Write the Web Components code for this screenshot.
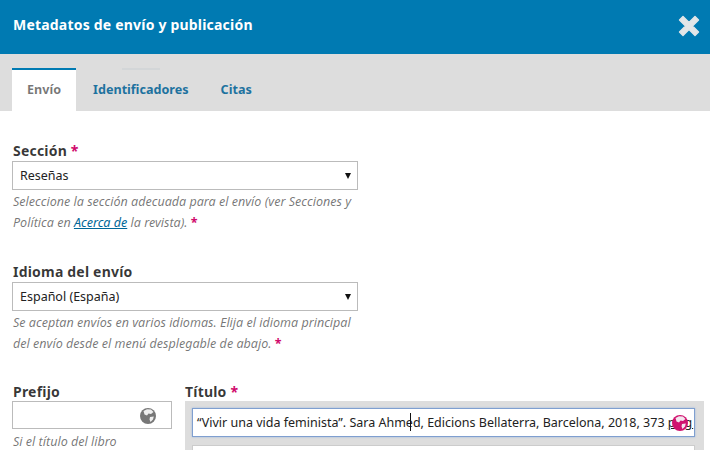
<!DOCTYPE html>
<html lang="es">
<head>
<meta charset="utf-8">
<title>Metadatos de envío y publicación</title>
<style>
  html, body { margin: 0; height: 100%; overflow: hidden; background: #fff; }
  body { font-family: "Noto Sans", sans-serif; color: rgba(0,0,0,.84); }
  u { letter-spacing: 1px; }
</style>
</head>
<body>
<template id="ojs-modal-template">
  <style>
    :host { display: block; width: 710px; height: 450px; overflow: hidden; }
    header { height: 54px; box-sizing: border-box; background: #007ab2; color: #fff; display: flex; align-items: center; justify-content: space-between; padding: 0 10px 6px 13px; font-size: 14px; font-weight: 700; letter-spacing: .2px; }
    svg { display: block; width: 22px; height: 22px; margin-top: 3px; }
    .body { padding: 0 12px; }
  </style>
  <header>
    <slot name="title"></slot>
    <svg viewBox="0 0 22 22"><path d="M5 1.5 11 7.5 17 1.5 20.5 5 14.5 11 20.5 17 17 20.5 11 14.5 5 20.5 1.5 17 7.5 11 1.5 5Z" fill="#e3e6e8" stroke="#e3e6e8" stroke-width="1.4" stroke-linejoin="round"/></svg>
  </header>
  <slot name="tabs"></slot>
  <div class="body"><slot></slot></div>
</template>

<template id="ojs-tabs-template">
  <style>
    :host { display: flex; height: 57px; box-sizing: border-box; padding: 14px 12px 0; background: #ddd; position: relative; }
    :host::after { content: ""; position: absolute; left: 122px; top: 14px; width: 38px; height: 2px; background: #d3d6d8; }
  </style>
  <slot></slot>
</template>

<template id="ojs-tab-template">
  <style>
    :host { display: block; box-sizing: border-box; height: 43px; padding: 0 15px; border-top: 2px solid transparent; font-size: 12.6px; font-weight: 700; line-height: 40px; color: #1e729f; margin-right: 2px; }
    :host([active]) { background: #fff; border-top-color: #007ab2; color: rgba(0,0,0,.54); }
  </style>
  <slot></slot>
</template>

<template id="ojs-field-template">
  <style>
    :host { display: block; box-sizing: border-box; width: 346px; }
    .label { font-size: 14px; font-weight: 700; line-height: 20px; letter-spacing: .2px; color: rgba(0,0,0,.78); padding-left: 1px; }
    .box { box-sizing: border-box; height: 29px; border: 1px solid #bbb; display: flex; align-items: center; justify-content: space-between; padding: 0 7px; font-size: 12.5px; color: #222; background: #fff; }
    .arrow { width: 0; height: 0; border-left: 3px solid transparent; border-right: 3px solid transparent; border-top: 6px solid #111; margin-right: -1px; }
    .help { font-size: 12.55px; font-style: italic; line-height: 21px; color: rgba(0,0,0,.54); margin-top: 1px; padding-left: 1px; }
  </style>
  <div class="label"><slot name="label"></slot></div>
  <div class="box"><slot name="value"></slot><span class="arrow"></span></div>
  <div class="help"><slot></slot></div>
</template>

<template id="ojs-prefix-template">
  <style>
    :host { display: block; width: 160px; flex: none; }
    .label { font-size: 14px; font-weight: 700; line-height: 18px; letter-spacing: .2px; color: rgba(0,0,0,.78); padding-left: 1px; }
    .box { box-sizing: border-box; height: 28px; border: 1px solid #bbb; display: flex; align-items: center; justify-content: flex-end; padding: 1px 15px 0 0; background: #fff; }
    svg { width: 16px; height: 16px; display: block; }
    .help { font-size: 12.55px; font-style: italic; line-height: 21px; color: rgba(0,0,0,.54); margin-top: 2px; padding-left: 1px; }
  </style>
  <div class="label"><slot name="label"></slot></div>
  <div class="box">
    <svg viewBox="0 0 16 16"><circle cx="8" cy="8" r="8" fill="#777"/><path d="M3.5 3 7 1.2 11 1.5 13.5 4 11 6 8.5 5.5 7 7.5 4.5 6.5ZM10 9 13.8 8.5 13 11.5 10.5 14 9.5 11.5Z" fill="#eee"/></svg>
  </div>
  <div class="help"><slot></slot></div>
</template>

<template id="ojs-title-template">
  <style>
    :host { display: block; flex: 1; min-width: 0; }
    .label { font-size: 14px; font-weight: 700; line-height: 18px; letter-spacing: .2px; color: rgba(0,0,0,.78); }
    .wrap { background: #ddd; padding: 7px 9px 0 7px; height: 60px; box-sizing: border-box; }
    .input { box-sizing: border-box; height: 29px; border: 1px solid #7f9fd0; box-shadow: 0 0 2px #9cb6dc; background: #fff; font-size: 12.5px; line-height: 27px; padding-left: 4px; white-space: nowrap; overflow: hidden; position: relative; color: #222; }
    .next { box-sizing: border-box; height: 30px; margin-top: 8px; background: #fff; border: 1px solid #ccc; }
    .caret { position: absolute; left: 217px; top: 4px; width: 1px; height: 18px; background: #111; }
    svg { position: absolute; right: 6px; top: 6px; width: 16px; height: 16px; }
  </style>
  <div class="label"><slot name="label"></slot></div>
  <div class="wrap">
    <div class="input"><slot></slot><span class="caret"></span>
      <svg viewBox="0 0 16 16"><circle cx="8" cy="8" r="8" fill="#d0136f"/><path d="M3.5 3 7 1.2 11 1.5 13.5 4 11 6 8.5 5.5 7 7.5 4.5 6.5ZM10 9 13.8 8.5 13 11.5 10.5 14 9.5 11.5Z" fill="#f3e6ee"/></svg>
    </div>
    <div class="next"></div>
  </div>
</template>

<template id="ojs-req-template">
  <style>:host { display: inline; color: #d00a6c; font-weight: 700; font-style: normal; }</style>
  <slot>*</slot>
</template>

<ojs-modal>
  <span slot="title">Metadatos de envío y publicación</span>
  <ojs-tabs slot="tabs">
    <ojs-tab active>Envío</ojs-tab>
    <ojs-tab>Identificadores</ojs-tab>
    <ojs-tab>Citas</ojs-tab>
  </ojs-tabs>
  <ojs-form>
    <ojs-field>
      <span slot="label">Sección <ojs-req></ojs-req></span>
      <span slot="value">Reseñas</span>
      Seleccione la sección adecuada para el envío (ver Secciones y<br>Política en <a href="#" style="color:#006798">Acerca de</a> la revista). <ojs-req></ojs-req>
    </ojs-field>
    <ojs-field>
      <span slot="label">Idioma del envío</span>
      <span slot="value">Español (España)</span>
      Se aceptan envíos en varios idiomas. Elija el idioma principal<br>del envío desde el menú desplegable de abajo. <ojs-req></ojs-req>
    </ojs-field>
    <ojs-row>
      <ojs-prefix>
        <span slot="label">Prefijo</span>
        Si el título del libro
      </ojs-prefix>
      <ojs-title>
        <span slot="label">Título <ojs-req></ojs-req></span>
        “Vivir una vida feminista”. Sara Ahmed, Edicions Bellaterra, Barcelona, 2018, 373 <u>pag</u>
      </ojs-title>
    </ojs-row>
  </ojs-form>
</ojs-modal>

<script>
  // every element here is only a shadow root around its template
  const simple = (name, template) => customElements.define(name, class extends HTMLElement {
    constructor() {
      super();
      const clone = document.getElementById(template).content.cloneNode(true);
      this.attachShadow({ mode: "open" }).append(clone);
    }
  });
  simple("ojs-modal", "ojs-modal-template");
  simple("ojs-tabs", "ojs-tabs-template");
  simple("ojs-tab", "ojs-tab-template");
  simple("ojs-field", "ojs-field-template");
  simple("ojs-prefix", "ojs-prefix-template");
  simple("ojs-title", "ojs-title-template");
  simple("ojs-req", "ojs-req-template");

  customElements.define("ojs-form", class extends HTMLElement {
    constructor() {
      super();
      this.attachShadow({ mode: "open" }).innerHTML = `<style>:host { display: flex; flex-direction: column; gap: 29px; padding-top: 30px; }</style><slot></slot>`;
    }
  });
  customElements.define("ojs-row", class extends HTMLElement {
    constructor() {
      super();
      this.attachShadow({ mode: "open" }).innerHTML = `<style>:host { display: flex; gap: 13px; width: 692px; }</style><slot></slot>`;
    }
  });
</script>
</body>
</html>
